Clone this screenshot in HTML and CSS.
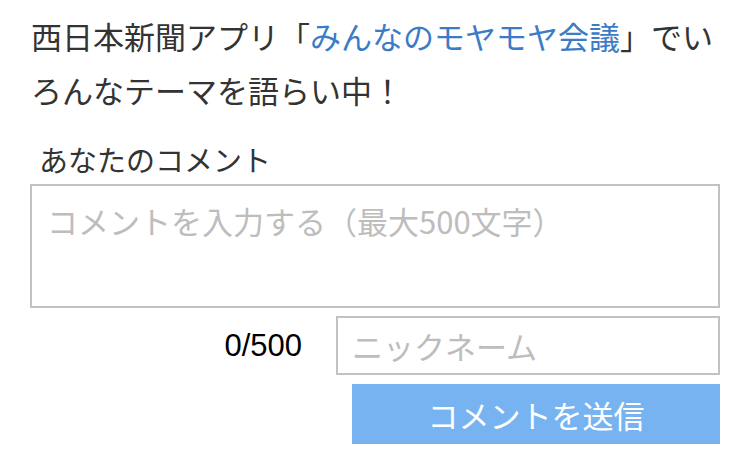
FILE: index.html
```html
<!DOCTYPE html>
<html lang="ja">
<head>
<meta charset="utf-8">
<link rel="stylesheet" href="styles.css">
</head>
<body>
<div class="wrap">
  <p class="intro">西日本新聞アプリ「<a class="link" href="#">みんなのモヤモヤ会議</a>」でいろんなテーマを語らい中！</p>
  <form class="form">
    <label class="label" for="comment">あなたのコメント</label>
    <textarea id="comment" class="comment" placeholder="コメントを入力する（最大500文字）"></textarea>
    <div class="row">
      <span class="count">0/500</span>
      <input class="nick" type="text" placeholder="ニックネーム">
    </div>
    <div class="actions">
      <button class="submit" type="button">コメントを送信</button>
    </div>
  </form>
</div>
</body>
</html>
```
FILE: styles.css
```css
html, body {
  margin: 0;
  padding: 0;
  background: #fff;
}
body {
  font-family: "Noto Sans CJK JP", "Noto Sans", sans-serif;
  color: #333;
}
.wrap {
  padding: 9px 30px 0 30px;
}
.intro {
  margin: 0;
  font-size: 31px;
  line-height: 54px;
  width: 690px;
  padding-left: 1px;
  box-sizing: border-box;
}
.link {
  color: #3a7cc6;
  text-decoration: none;
}
.form {
  display: flex;
  flex-direction: column;
  margin-top: 22px;
}
.label {
  display: block;
  padding-left: 9px;
  font-size: 29px;
  line-height: 40px;
  color: #333;
}
.comment {
  display: block;
  box-sizing: border-box;
  width: 690px;
  height: 124px;
  margin: 5px 0 0 0;
  border: 2px solid #c2c2c2;
  border-radius: 0;
  padding: 16px 15px;
  font-family: "Noto Sans CJK JP", sans-serif;
  font-size: 31px;
  line-height: 38px;
  resize: none;
  outline: none;
}
.comment::placeholder,
.nick::placeholder {
  color: #bdbdbd;
  opacity: 1;
}
.row {
  display: flex;
  justify-content: flex-end;
  align-items: center;
  gap: 34px;
  margin-top: 8px;
  width: 690px;
}
.count {
  font-family: "Liberation Sans", Arial, sans-serif;
  font-size: 31px;
  color: #000;
}
.nick {
  box-sizing: border-box;
  width: 384px;
  height: 59px;
  margin: 0;
  border: 2px solid #c2c2c2;
  border-radius: 0;
  padding: 0 14px;
  font-family: "Noto Sans CJK JP", sans-serif;
  font-size: 31px;
  outline: none;
}
.actions {
  display: flex;
  justify-content: flex-end;
  width: 690px;
  margin-top: 9px;
}
.submit {
  width: 368px;
  height: 60px;
  margin: 0;
  border: 0;
  border-radius: 0;
  background: #78b3f1;
  color: #fff;
  font-family: "Noto Sans CJK JP", sans-serif;
  font-size: 31px;
  padding: 0;
  cursor: pointer;
}
```
